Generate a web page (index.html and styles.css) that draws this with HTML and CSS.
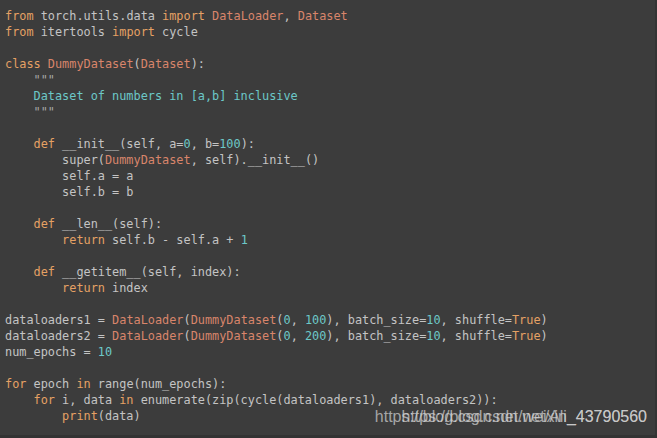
FILE: index.html
```html
<!DOCTYPE html>
<html>
<head>
<meta charset="utf-8">
<link rel="stylesheet" href="styles.css">
</head>
<body>
<div class="frame">
<div class="code">
<div class="ln"><span class="kw">from</span> torch.utils.data <span class="kw">import</span> <span class="cls">DataLoader</span>, <span class="cls">Dataset</span></div>
<div class="ln"><span class="kw">from</span> itertools <span class="kw">import</span> cycle</div>
<div class="ln"></div>
<div class="ln"><span class="kw">class</span> <span class="cls">DummyDataset</span>(<span class="cls">Dataset</span>):</div>
<div class="ln i1"><span class="q">"""</span></div>
<div class="ln i1"><span class="str">Dataset of numbers in [a,b] inclusive</span></div>
<div class="ln i1"><span class="q">"""</span></div>
<div class="ln"></div>
<div class="ln i1"><span class="kw">def</span> __init__(self, a=<span class="num">0</span>, b=<span class="num">100</span>):</div>
<div class="ln i2">super(<span class="cls">DummyDataset</span>, self).__init__()</div>
<div class="ln i2">self.a = a</div>
<div class="ln i2">self.b = b</div>
<div class="ln"></div>
<div class="ln i1"><span class="kw">def</span> __len__(self):</div>
<div class="ln i2"><span class="kw">return</span> self.b - self.a + <span class="num">1</span></div>
<div class="ln"></div>
<div class="ln i1"><span class="kw">def</span> __getitem__(self, index):</div>
<div class="ln i2"><span class="kw">return</span> index</div>
<div class="ln"></div>
<div class="ln">dataloaders1 = <span class="cls">DataLoader</span>(<span class="cls">DummyDataset</span>(<span class="num">0</span>, <span class="num">100</span>), batch_size=<span class="num">10</span>, shuffle=<span class="kw">True</span>)</div>
<div class="ln">dataloaders2 = <span class="cls">DataLoader</span>(<span class="cls">DummyDataset</span>(<span class="num">0</span>, <span class="num">200</span>), batch_size=<span class="num">10</span>, shuffle=<span class="kw">True</span>)</div>
<div class="ln">num_epochs = <span class="num">10</span></div>
<div class="ln"></div>
<div class="ln"><span class="kw">for</span> epoch <span class="kw">in</span> range(num_epochs):</div>
<div class="ln i1"><span class="kw">for</span> i, data <span class="kw">in</span> enumerate(zip(cycle(dataloaders1), dataloaders2)):</div>
<div class="ln i2"><span class="kw">print</span>(data)</div>
</div>
<div class="watermark"><span class="wm wm-a">https://blog.csdn.net/weixin_43790560</span><span class="wm wm-b">https://blog.csdn.net/Ali_43790560</span></div>
</div>
</body>
</html>
```

FILE: styles.css
```css
html, body {
  margin: 0;
  padding: 0;
  background: #3c3c3c;
}
.frame {
  position: relative;
  width: 655px;
  height: 435px;
  background: #3c3c3c;
  border-right: 2px solid #343434;
  border-bottom: 3px solid #333333;
  overflow: hidden;
}
.code {
  display: flex;
  flex-direction: column;
  padding: 8px 0 0 5px;
  font-family: "DejaVu Sans Mono", monospace;
  font-size: 11.86px;
  line-height: 16px;
  color: #c4c4c4;
}
.ln {
  height: 16px;
  white-space: pre;
}
.i1 { padding-left: 28.56px; }
.i2 { padding-left: 57.12px; }
.kw { color: #e5a164; }
.cls { color: #d9856b; }
.num { color: #6cc8c8; }
.str { color: #6cc8c8; }
.q { color: #a8a8a8; }
.watermark {
  position: absolute;
  left: 377px;
  top: 407px;
  width: 270px;
  height: 20px;
  font-family: "Liberation Sans", Arial, sans-serif;
  font-size: 16px;
  line-height: 20px;
  color: rgba(215, 215, 215, 0.7);
}
.wm {
  position: absolute;
  top: 0;
  right: 0;
  white-space: nowrap;
}
```
